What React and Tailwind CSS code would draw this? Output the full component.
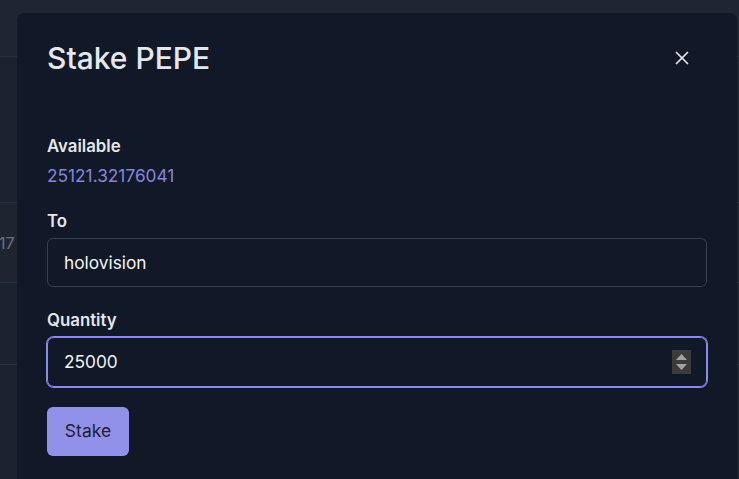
import { X } from "lucide-react";

function SpinButtons() {
  return (
    <div className="flex h-[24px] w-[19px] flex-col items-center justify-center gap-[4px] bg-[#3b3b3b]">
      <svg width="11" height="6" viewBox="0 0 11 6">
        <path d="M5.5 0 L11 6 L0 6 Z" fill="#a3a3a3" />
      </svg>
      <svg width="11" height="6" viewBox="0 0 11 6">
        <path d="M0 0 L11 0 L5.5 6 Z" fill="#a3a3a3" />
      </svg>
    </div>
  );
}

function StakeDialog() {
  return (
    <div className="absolute left-[17px] top-[13px] w-[720px] rounded-t-[7px] bg-[#111827] px-[30px] pt-[27px] pb-[40px] font-['Inter',sans-serif]">
      <div className="flex items-center justify-between">
        <h2 className="text-[30px] leading-[36px] font-medium text-[#e5e7eb]">Stake PEPE</h2>
        <button className="mr-[14px] text-[#e5e7eb]">
          <X size={22} strokeWidth={1.9} />
        </button>
      </div>

      <div className="mt-[58px]">
        <p className="text-[16.8px] leading-[24px] font-semibold text-[#e5e7eb]">Available</p>
        <p className="mt-[6px] text-[17.3px] leading-[24px] text-[#8585dc]">25121.32176041</p>
      </div>

      <label className="mt-[21px] block text-[16.8px] leading-[24px] font-semibold text-[#e5e7eb]">To</label>
      <div className="mt-[5px] flex h-[49px] items-center rounded-[6px] border border-[#374151] px-[16px] text-[17.3px] text-[#f3f4f6]">
        holovision
      </div>

      <label className="mt-[21px] block text-[16.8px] leading-[24px] font-semibold text-[#e5e7eb]">Quantity</label>
      <div className="mt-[5px] flex h-[50px] items-center justify-between rounded-[7px] border border-[#8b8be9] pl-[16px] pr-[15px] text-[17.3px] text-[#f3f4f6] shadow-[0_0_0_1px_#8b8be9]">
        <span>25000</span>
        <SpinButtons />
      </div>

      <button className="mt-[20px] h-[49px] w-[82px] rounded-[6px] bg-[#9191e9] text-[17.5px] text-[#1f2037]">
        Stake
      </button>
    </div>
  );
}

export default function App() {
  return (
    <div className="relative h-[479px] w-[739px] overflow-hidden bg-[#1c2330] font-['Inter',sans-serif]">
      <div className="h-[57px] border-b border-[#283040] bg-[#1e2634]" />
      <div className="h-[146px] border-b border-[#283040]" />
      <div className="flex h-[80px] items-center border-b border-[#283040] bg-[#1e2531]">
        <span className="-ml-[1px] text-[16px] text-[#6b7280]">17</span>
      </div>
      <div className="h-[82px] border-b border-[#283040]" />
      <StakeDialog />
    </div>
  );
}
